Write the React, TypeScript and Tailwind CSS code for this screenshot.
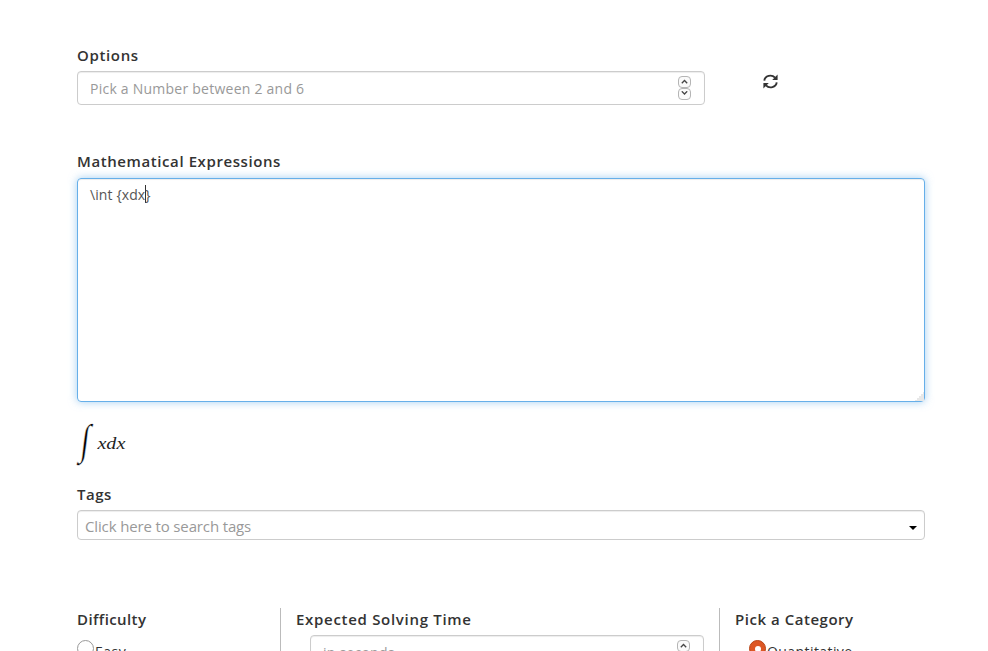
import type { ReactNode } from "react";

function Label({ children, className = "" }: { children: ReactNode; className?: string }) {
  return (
    <div className={`h-5 whitespace-nowrap text-[15px] font-semibold leading-5 text-[#333] ${className}`}>
      {children}
    </div>
  );
}

function SpinButton({ down = false }: { down?: boolean }) {
  return (
    <span className="flex h-3 w-[13px] items-center justify-center rounded-[4px] border border-[#b5b5b5] bg-[#fafafa]">
      <svg width="7" height="5" viewBox="0 0 7 5" fill="none" stroke="#444" strokeWidth="1.3">
        <path d={down ? "M.8 .3 3.5 3 6.2 .3" : "M.8 4.2 3.5 1.5 6.2 4.2"} />
      </svg>
    </span>
  );
}

function NumberField({ placeholder, className = "" }: { placeholder: string; className?: string }) {
  return (
    <div
      className={`flex h-[34px] items-center justify-between rounded border border-[#ccc] pl-3 pr-[13px] text-sm text-[#999] shadow-[inset_0_1px_1px_rgba(0,0,0,0.075)] ${className}`}
    >
      <span className="mt-[2px] tracking-[0.24px]">{placeholder}</span>
      <span className="-mt-px flex flex-col">
        <SpinButton />
        <SpinButton down />
      </span>
    </div>
  );
}

function RefreshIcon() {
  return (
    <svg width="15" height="15" viewBox="0 0 15 15" fill="none" stroke="#333" strokeWidth="1.9">
      <path d="M1.3 6.6A6.1 5.6 0 0 1 12 3.6" />
      <path d="M13.7 8.4A6.1 5.6 0 0 1 3 11.4" />
      <path d="M14.6 .6V6H9.2zM.4 14.4V9h5.4z" fill="#333" stroke="none" />
    </svg>
  );
}

export default function App() {
  return (
    <div className="h-[651px] overflow-hidden bg-white pl-[77px] pt-[45px] font-['Open_Sans',sans-serif] text-[#333]">
      <div className="flex h-[60px]">
        <div className="w-[628px]">
          <Label className="tracking-[0.65px]">Options</Label>
          <NumberField placeholder="Pick a Number between 2 and 6" className="mt-[6px]" />
        </div>
        <div className="ml-[58px] mt-[29px]">
          <RefreshIcon />
        </div>
      </div>

      <Label className="mt-[46px] tracking-[0.59px]">Mathematical Expressions</Label>
      <div className="mt-[7px] flex h-[224px] w-[848px] items-end justify-between rounded border border-[#66afe9] shadow-[inset_0_1px_1px_rgba(0,0,0,0.075),0_0_8px_rgba(102,175,233,0.6)]">
        <div className="flex self-start pl-3 pt-[6px] text-sm leading-5 tracking-[0.1px] text-[#555]">
          <span>{"\\int {xdx"}</span>
          <span className="-mr-px h-[18px] w-px bg-[#333]" />
          <span>{"}"}</span>
        </div>
        <svg width="9" height="9" viewBox="0 0 9 9" fill="#e8e8e8" shapeRendering="crispEdges">
          <path d="M8 0h1v9H0V8h2V6h2V4h2V2h2z" />
        </svg>
      </div>

      <div className="mt-[21px] flex h-[43px] items-start text-black">
        <svg width="56" height="43" viewBox="0 0 56 43" className="overflow-visible">
          <text
            transform="translate(2.5 30.7) skewX(-7) scale(.83 1.12)"
            fontFamily="'Liberation Serif', serif"
            fontSize="38"
            stroke="white"
            strokeWidth=".5"
          >
            ∫
          </text>
          <text
            transform="translate(20.4 26) scale(1.26 1)"
            fontFamily="'Liberation Serif', serif"
            fontStyle="italic"
            fontSize="16"
            fill="#222"
          >
            xdx
          </text>
        </svg>
      </div>

      <Label className="mt-[18px] tracking-[0.5px]">Tags</Label>
      <div className="mt-[6px] flex h-[30px] w-[848px] items-center justify-between rounded border border-[#ccc] pl-[7px] pr-[7px] text-[15px] text-[#999] shadow-[inset_0_1px_1px_rgba(0,0,0,0.075)]">
        <span className="mt-[2px] tracking-[-0.14px]">Click here to search tags</span>
        <svg width="8" height="4" viewBox="0 0 8 4" className="mt-[5px]">
          <path d="M0 0h8L4 4z" fill="black" />
        </svg>
      </div>

      <div className="mt-[68px] flex h-[60px]">
        <section className="w-[203px] pt-px">
          <Label className="tracking-[0.4px]">Difficulty</Label>
          <div className="mt-[11px] flex">
            <span className="h-[17px] w-[17px] rounded-full border border-[#999] bg-white" />
            <span className="ml-px mt-[2px] text-sm leading-5 tracking-[0.5px]">Easy</span>
          </div>
        </section>
        <section className="w-[439px] border-l border-[#bbb] pl-[15px] pt-px">
          <Label className="tracking-[0.7px]">Expected Solving Time</Label>
          <NumberField placeholder="in seconds" className="ml-[14px] mt-[6px] w-[394px]" />
        </section>
        <section className="border-l border-[#bbb] pl-[15px] pt-px">
          <Label className="tracking-[0.53px]">Pick a Category</Label>
          <div className="ml-[14px] mt-[11px] flex">
            <span className="flex h-[17px] w-[17px] items-center justify-center rounded-full border border-[#b84618] bg-[#dd5724]">
              <span className="h-[6px] w-[6px] rounded-full bg-white" />
            </span>
            <span className="ml-px mt-[2px] text-sm leading-5 tracking-[0.42px]">Quantitative</span>
          </div>
        </section>
      </div>
    </div>
  );
}
